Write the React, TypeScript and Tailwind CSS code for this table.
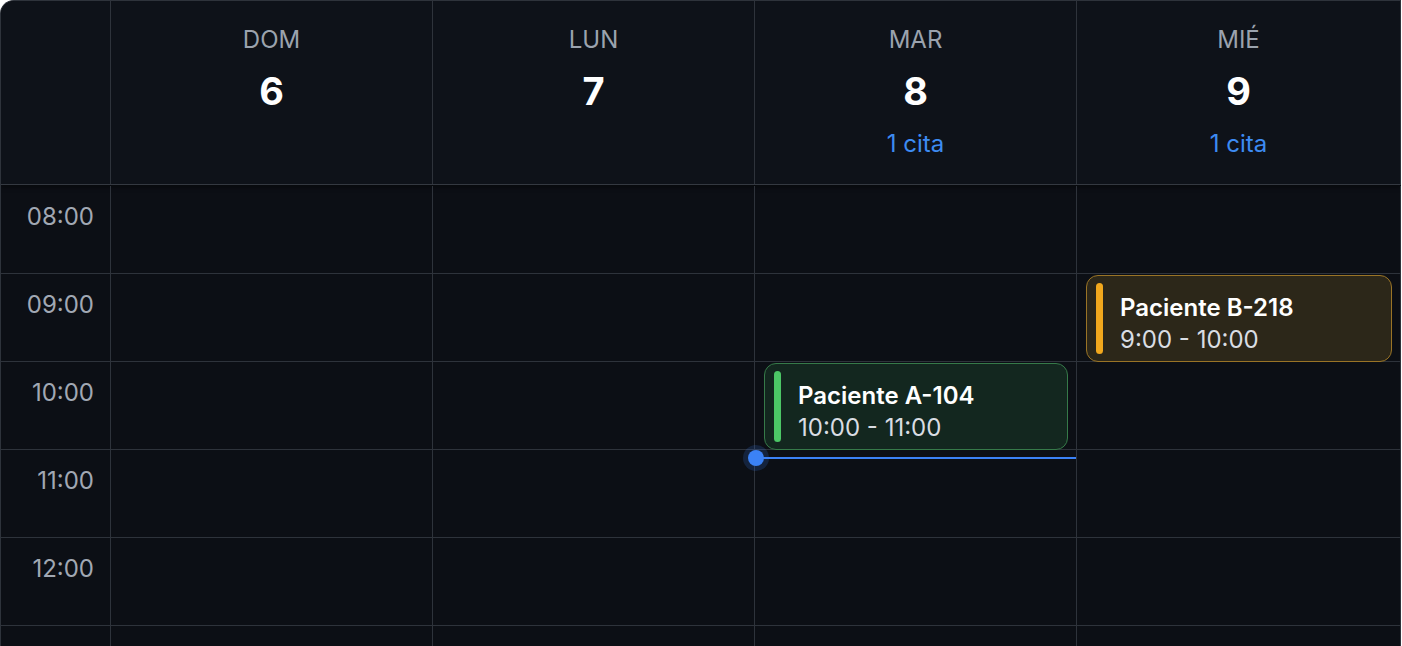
import React from "react";

type Cita = {
  paciente: string;
  inicio: number;
  fin: number;
  tono: "green" | "amber";
};

type Dia = {
  nombre: string;
  numero: number;
  citas: Cita[];
  ahora?: number;
};

const HORAS = [8, 9, 10, 11, 12];
const ALTO_HORA = 88;

const DIAS: Dia[] = [
  { nombre: "DOM", numero: 6, citas: [] },
  { nombre: "LUN", numero: 7, citas: [] },
  {
    nombre: "MAR",
    numero: 8,
    citas: [{ paciente: "Paciente A-104", inicio: 10, fin: 11, tono: "green" }],
    ahora: 11.1,
  },
  {
    nombre: "MIÉ",
    numero: 9,
    citas: [{ paciente: "Paciente B-218", inicio: 9, fin: 10, tono: "amber" }],
  },
];

const tonos = {
  green: {
    card: "bg-[#13271f] border-[#367a49]",
    bar: "bg-[#4cc766]",
  },
  amber: {
    card: "bg-[#2c2719] border-[#9a7426]",
    bar: "bg-[#f2a81d]",
  },
};

const hh = (h: number) => `${h}:00`;
const hh2 = (h: number) => `${String(h).padStart(2, "0")}:00`;

const CitaCard = ({ cita }: { cita: Cita }) => {
  const t = tonos[cita.tono];
  return (
    <div
      className={`absolute left-[9px] right-[8px] z-10 flex items-stretch rounded-[12px] border py-[7px] pl-[9px] ${t.card}`}
      style={{
        top: (cita.inicio - HORAS[0]) * ALTO_HORA + 1,
        height: (cita.fin - cita.inicio) * ALTO_HORA - 1,
      }}
    >
      <div className={`w-[7px] shrink-0 rounded-full ${t.bar}`} />
      <div className="flex flex-col pl-[17px] pt-[9px]">
        <span className="text-[24px] font-semibold leading-[32px] text-white">
          {cita.paciente}
        </span>
        <span className="text-[24px] leading-[32px] text-[#d9dde3]">
          {hh(cita.inicio)} - {hh(cita.fin)}
        </span>
      </div>
    </div>
  );
};

export default function App() {
  return (
    <div className="h-screen w-[1401px] overflow-hidden rounded-tl-[14px] border-l border-t border-[#2e333b] bg-[#0c0f15] font-['Inter',sans-serif]">
      {/* cabecera */}
      <div className="grid grid-cols-[110px_322px_322px_322px_1fr] border-b border-[#343941] bg-[#0e1219] shadow-[0_3px_4px_rgba(0,0,0,0.35)]">
        <div className="h-[183px] border-r border-[#2e333b]" />
        {DIAS.map((d) => (
          <div
            key={d.nombre}
            className="flex h-[183px] flex-col items-center border-r border-[#2e333b] pt-[24px]"
          >
            <span className="text-[24px] leading-[30px] text-[#9ba3ae]">
              {d.nombre}
            </span>
            <span className="mt-[14px] text-[38px] font-bold leading-[44px] text-white">
              {d.numero}
            </span>
            {d.citas.length > 0 && (
              <span className="mt-[16px] text-[24px] leading-[30px] text-[#3d8bf2]">
                {d.citas.length} cita
              </span>
            )}
          </div>
        ))}
      </div>

      {/* cuerpo */}
      <div className="grid grid-cols-[110px_322px_322px_322px_1fr] pt-px">
        <div className="border-r border-[#2e333b]">
          {HORAS.map((h) => (
            <div
              key={h}
              className="h-[88px] border-b border-[#2e333b] pr-[16px] pt-[16px] text-right text-[24px] leading-[30px] text-[#a1a8b3]"
            >
              {hh2(h)}
            </div>
          ))}
          <div className="h-[88px]" />
        </div>
        {DIAS.map((d) => (
          <div key={d.nombre} className="relative border-r border-[#2e333b]">
            {HORAS.map((h) => (
              <div key={h} className="h-[88px] border-b border-[#2e333b]" />
            ))}
            <div className="h-[88px]" />
            {d.citas.map((c) => (
              <CitaCard key={c.paciente} cita={c} />
            ))}
            {d.ahora !== undefined && (
              <div
                className="absolute left-0 right-0 z-20 flex items-center"
                style={{ top: (d.ahora - HORAS[0]) * ALTO_HORA - 2 }}
              >
                <div className="absolute -left-[7px] h-[16px] w-[16px] rounded-full bg-[#3b82f6] shadow-[0_0_0_5px_rgba(59,130,246,0.18)]" />
                <div className="h-[2px] w-full bg-[#3b82f6]" />
              </div>
            )}
          </div>
        ))}
      </div>
    </div>
  );
}
